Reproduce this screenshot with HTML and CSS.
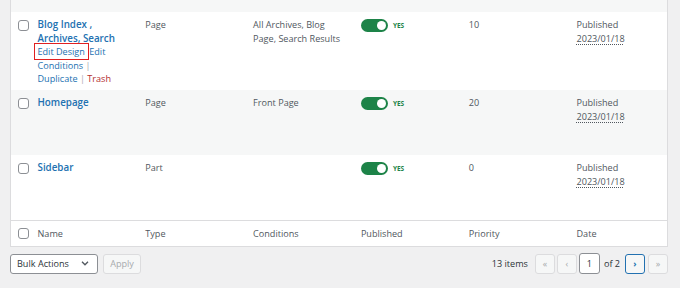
FILE: index.html
```html
<!DOCTYPE html>
<html lang="en">
<head>
    <meta charset="UTF-8">
    <meta name="viewport" content="width=device-width, initial-scale=1.0">
    <title>Layouts</title>
    <link rel="stylesheet" href="styles.css">
</head>
<body>
    <div class="wrap">
        <table class="list-table">
            <colgroup>
                <col class="col-cb">
                <col><col><col><col><col><col class="col-date">
            </colgroup>
            <tbody>
                <tr class="stripe spacer"><td colspan="7"></td></tr>
                <tr class="row-tall">
                    <td class="cb"><span class="checkbox"></span></td>
                    <td>
                        <a class="title" href="#">Blog Index , Archives, Search</a>
                        <div class="row-actions">
                            <a class="boxed" href="#">Edit Design</a> <a href="#">Edit Conditions</a> <span class="sep">|</span>
                            <a href="#">Duplicate</a> <span class="sep">|</span> <a class="trash" href="#">Trash</a>
                        </div>
                    </td>
                    <td>Page</td>
                    <td>All Archives, Blog Page, Search Results</td>
                    <td><span class="toggle"><span class="knob"></span></span><span class="yes">Yes</span></td>
                    <td>10</td>
                    <td>Published<br><abbr>2023/01/18</abbr></td>
                </tr>
                <tr class="stripe">
                    <td class="cb"><span class="checkbox"></span></td>
                    <td><a class="title" href="#">Homepage</a></td>
                    <td>Page</td>
                    <td>Front Page</td>
                    <td><span class="toggle"><span class="knob"></span></span><span class="yes">Yes</span></td>
                    <td>20</td>
                    <td>Published<br><abbr>2023/01/18</abbr></td>
                </tr>
                <tr>
                    <td class="cb"><span class="checkbox"></span></td>
                    <td><a class="title" href="#">Sidebar</a></td>
                    <td>Part</td>
                    <td></td>
                    <td><span class="toggle"><span class="knob"></span></span><span class="yes">Yes</span></td>
                    <td>0</td>
                    <td>Published<br><abbr>2023/01/18</abbr></td>
                </tr>
            </tbody>
            <tfoot>
                <tr>
                    <th class="cb"><span class="checkbox"></span></th>
                    <th>Name</th>
                    <th>Type</th>
                    <th>Conditions</th>
                    <th>Published</th>
                    <th>Priority</th>
                    <th>Date</th>
                </tr>
            </tfoot>
        </table>

        <div class="tablenav">
            <div class="bulk">
                <div class="select">Bulk Actions
                    <svg width="8" height="5" viewBox="0 0 8 5"><path d="M1 0.8l3 3 3-3" fill="none" stroke="#50575e" stroke-width="1.3"/></svg>
                </div>
                <button class="btn" disabled>Apply</button>
            </div>
            <div class="pages">
                <span class="count">13 items</span>
                <span class="pg off">&laquo;</span>
                <span class="pg off">&lsaquo;</span>
                <span class="current">1</span>
                <span class="of">of 2</span>
                <span class="pg next">&rsaquo;</span>
                <span class="pg off">&raquo;</span>
            </div>
        </div>
    </div>
</body>
</html>
```

FILE: styles.css
```css
body {
    margin: 0;
    background-color: #f0f0f1;
    font-family: 'Open Sans', 'Noto Sans', sans-serif;
    font-size: 9.1px;
    color: #50575e;
}

.wrap {
    padding-left: 10px;
    width: 658px;
}

.list-table {
    width: 658px;
    table-layout: fixed;
    border-collapse: collapse;
    background-color: #fff;
    border: 1px solid #dcdcde;
    border-top: none;
}

.col-cb {
    width: 23px;
}

.col-date {
    width: 95px;
}

.list-table tbody tr {
    height: 65px;
}

.list-table tbody tr.row-tall {
    height: 78px;
}

.list-table tbody tr.spacer {
    height: 12px;
}

.list-table td {
    vertical-align: top;
    padding: 6px 10px 0 4px;
    line-height: 13.6px;
}

.list-table .spacer td {
    padding: 0;
}

.stripe {
    background-color: #f6f7f7;
}

.list-table td.cb,
.list-table th.cb {
    padding: 8px 0 0 7px;
}

.checkbox {
    display: block;
    width: 9px;
    height: 9px;
    border: 1px solid #8c8f94;
    border-radius: 3px;
    background-color: #fff;
}

.list-table tfoot tr {
    height: 26px;
}

.list-table tfoot th {
    text-align: left;
    font-weight: normal;
    padding: 0 4px;
    line-height: 13px;
    border-top: 1px solid #dcdcde;
    vertical-align: middle;
}

.list-table tfoot th.cb {
    padding-top: 0;
}

a {
    color: #2271b1;
    text-decoration: none;
}

.title {
    font-weight: 600;
    font-size: 9.8px;
}

.row-actions .boxed {
    outline: 1px solid #e02020;
    outline-offset: 1px;
    padding: 0 2px;
    margin-left: -2px;
}

.sep {
    color: #a7aaad;
}

.row-actions .trash {
    color: #b32d2e;
}

.toggle {
    display: inline-block;
    vertical-align: top;
    margin-top: 1px;
    width: 27px;
    height: 13px;
    border-radius: 7px;
    background-color: #1d8348;
    position: relative;
}

.knob {
    position: absolute;
    right: 2px;
    top: 2px;
    width: 9px;
    height: 9px;
    border-radius: 50%;
    background-color: #fff;
}

.yes {
    display: inline-block;
    margin-left: 5px;
    margin-top: 1px;
    font-size: 6.5px;
    font-weight: 700;
    text-transform: uppercase;
    color: #1d8348;
    vertical-align: top;
    line-height: 14px;
}

abbr {
    text-decoration: underline dotted;
    text-underline-offset: 2px;
}

.tablenav {
    display: flex;
    justify-content: space-between;
    align-items: center;
    margin-top: 7px;
    height: 20px;
}

.bulk {
    display: flex;
    gap: 5px;
}

.select {
    box-sizing: border-box;
    display: flex;
    justify-content: space-between;
    align-items: center;
    width: 88px;
    height: 20px;
    padding: 0 8px 0 6px;
    background-color: #fff;
    border: 1px solid #8c8f94;
    border-radius: 3px;
    color: #2c3338;
}

.btn {
    box-sizing: border-box;
    height: 20px;
    width: 38px;
    padding: 0;
    font-family: inherit;
    font-size: 9.1px;
    color: #a7aaad;
    background-color: #f6f7f7;
    border: 1px solid #dcdcde;
    border-radius: 3px;
}

.pages {
    display: flex;
    align-items: center;
    gap: 2px;
}

.count {
    margin-right: 5px;
    color: #2c3338;
}

.pg {
    box-sizing: border-box;
    width: 20px;
    height: 20px;
    display: flex;
    align-items: center;
    justify-content: center;
    border: 1px solid #dcdcde;
    border-radius: 3px;
    background-color: #f6f7f7;
    color: #a7aaad;
    font-size: 9px;
}

.pg.next {
    border-color: #2271b1;
    color: #2271b1;
    font-weight: 700;
    margin-left: 3px;
    margin-right: 1px;
}

.current {
    box-sizing: border-box;
    width: 21px;
    height: 21px;
    display: flex;
    align-items: center;
    justify-content: center;
    border: 1px solid #8c8f94;
    border-radius: 3px;
    background-color: #fff;
    color: #2c3338;
}

.of {
    color: #2c3338;
    margin-left: 2px;
}
```
